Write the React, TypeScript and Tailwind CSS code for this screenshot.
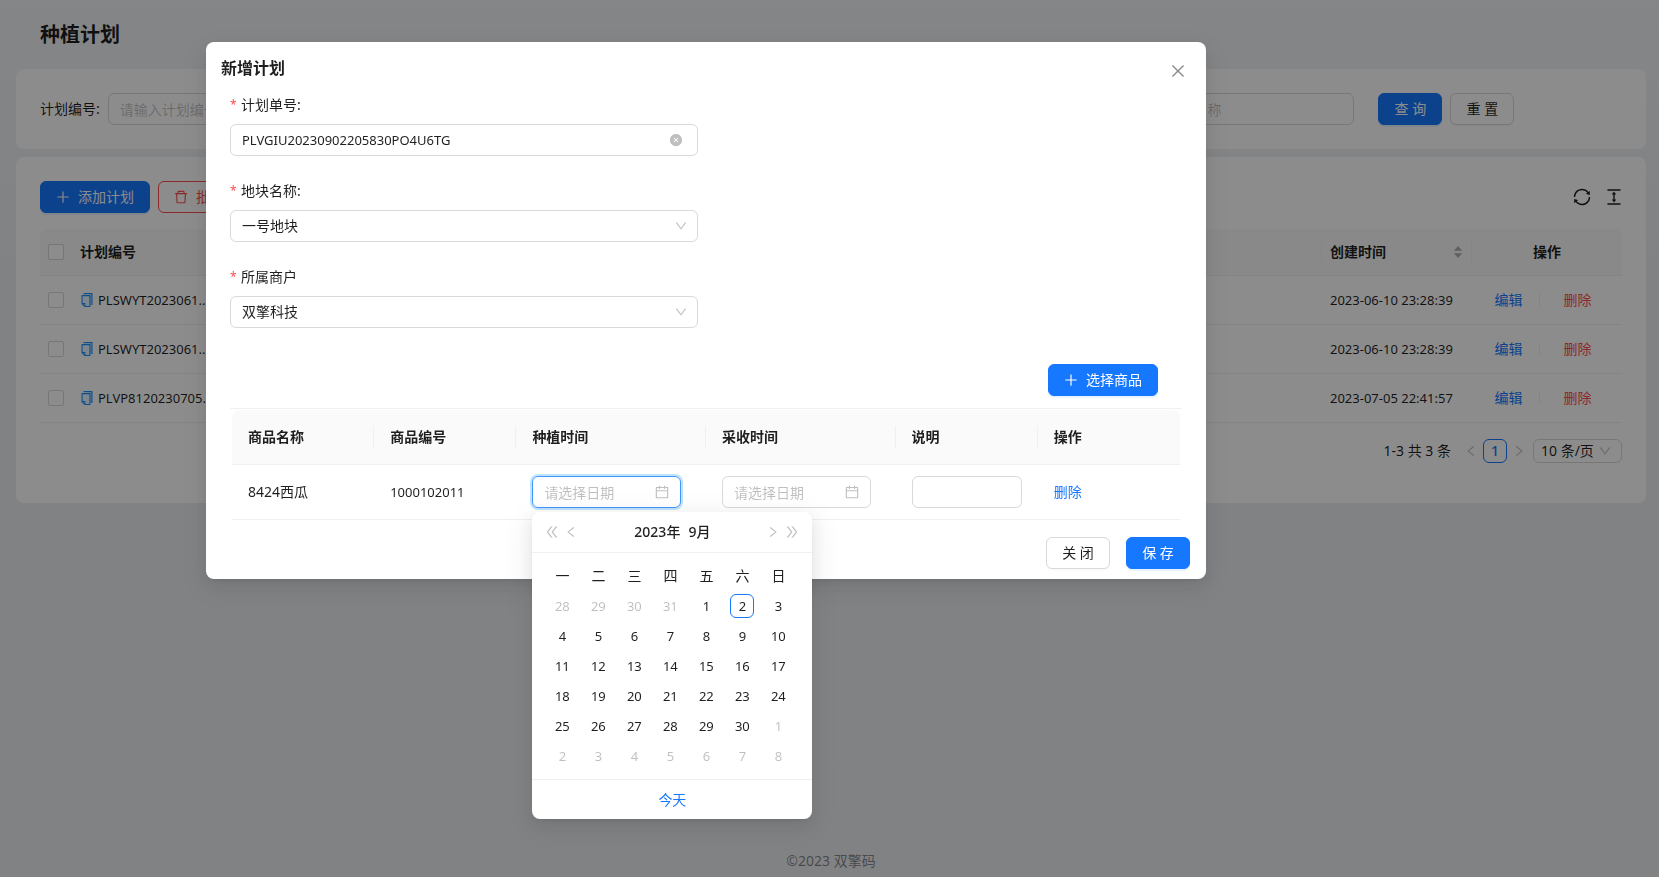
import React, { useState } from 'react';
import {
  AiFillCloseCircle,
  AiOutlineCalendar,
  AiOutlineClose,
  AiOutlineColumnHeight,
  AiOutlineDelete,
  AiOutlineDoubleLeft,
  AiOutlineDoubleRight,
  AiOutlineDown,
  AiOutlineLeft,
  AiOutlinePlus,
  AiOutlineRight,
  AiOutlineSync,
} from 'react-icons/ai';
import clsx from 'clsx';

interface Plan {
  id: number;
  code: string;
  createTime: string;
}

const plans: Plan[] = [
  { id: 1, code: 'PLSWYT2023061...', createTime: '2023-06-10 23:28:39' },
  { id: 2, code: 'PLSWYT2023061...', createTime: '2023-06-10 23:28:39' },
  { id: 3, code: 'PLVP8120230705...', createTime: '2023-07-05 22:41:57' },
];

const weekdays = ['一', '二', '三', '四', '五', '六', '日'];

// September 2023, first cell is Monday 28 August
const calendarDays = Array.from({ length: 42 }, (_, i) => {
  const date = new Date(2023, 7, 28 + i);
  return { day: date.getDate(), inMonth: date.getMonth() === 8 };
});
const calendarWeeks = Array.from({ length: 6 }, (_, i) => calendarDays.slice(i * 7, i * 7 + 7));

const App: React.FC = () => {
  const [open, setOpen] = useState(true);

  return (
    <div className="min-h-screen font-['Noto_Sans','Noto_Sans_CJK_SC',sans-serif] text-sm leading-[22px] text-black/88">
      <div className="flex min-h-screen flex-col bg-linear-to-b from-[#f2f4f6] to-[#ebedf1] to-30% pr-[13px] pl-4">
        <h1 className="px-6 pt-[21px] pb-5 text-xl leading-7 font-semibold">种植计划</h1>
        <SearchForm />
        <PlanTable />
        <footer className="mt-auto pb-[5px] text-center text-black/45">©2023 双擎码</footer>
      </div>
      {open && <PlanModal onClose={() => setOpen(false)} />}
    </div>
  );
};

export default App;

const SearchForm: React.FC = () => {
  return (
    <form className="rounded-lg bg-white p-6" onSubmit={(e) => e.preventDefault()}>
      <div className="-mx-3 grid grid-cols-[5fr_5fr_5fr_5fr_4fr]">
        <div className="flex items-center gap-2 px-3">
          <label htmlFor="code" className="shrink-0">计划编号:</label>
          <input id="code" placeholder="请输入计划编号" className="h-8 w-full min-w-0 rounded-md border border-[#d9d9d9] px-[11px] placeholder:text-black/25" />
        </div>
        <div className="col-start-4 flex items-center gap-2 px-3">
          <label htmlFor="land" className="shrink-0">地块名称:</label>
          <input id="land" placeholder="请输入地块名称" className="h-8 w-full min-w-0 rounded-md border border-[#d9d9d9] px-[11px] placeholder:text-black/25" />
        </div>
        <div className="flex gap-2 px-3">
          <Button type="primary">查 询</Button>
          <Button>重 置</Button>
        </div>
      </div>
    </form>
  );
};

interface ButtonProps {
  type?: 'primary' | 'default' | 'danger';
  icon?: React.ReactNode;
  onClick?(): void;
  children: React.ReactNode;
}

const Button: React.FC<ButtonProps> = ({ type = 'default', icon, onClick, children }) => {
  return (
    <button
      type="button"
      onClick={onClick}
      className={clsx(
        'flex h-8 shrink-0 items-center justify-center gap-2 rounded-md border px-[15px] whitespace-nowrap',
        !icon && 'w-16',
        type === 'primary' && 'border-[#1677ff] bg-[#1677ff] text-white shadow-[0_2px_0_rgba(5,145,255,0.1)]',
        type === 'default' && 'border-[#d9d9d9] bg-white shadow-[0_2px_0_rgba(0,0,0,0.02)]',
        type === 'danger' && 'border-[#ff4d4f] bg-white text-[#ff4d4f]',
      )}
    >
      {icon}
      <span>{children}</span>
    </button>
  );
};

const CopyIcon: React.FC = () => (
  <svg viewBox="64 64 896 896" className="size-3.5 shrink-0" aria-hidden="true">
    <path fill="#91caff" d="M736 136h56v688h-56z" />
    <path fill="#e6f7ff" d="M232 706h142c22.1 0 40 17.9 40 40v142h250V264H232v442z" />
    <path fill="#1890ff" d="M832 64H296c-4.4 0-8 3.6-8 8v56c0 4.4 3.6 8 8 8h496v688c0 4.4 3.6 8 8 8h56c4.4 0 8-3.6 8-8V96c0-17.7-14.3-32-32-32z" />
    <path fill="#1890ff" d="M704 192H192c-17.7 0-32 14.3-32 32v530.7c0 8.5 3.4 16.6 9.4 22.6l173.3 173.3c2.2 2.2 4.7 4 7.4 5.5v1.9h4.2c3.5 1.3 7.2 2 11 2H704c17.7 0 32-14.3 32-32V224c0-17.7-14.3-32-32-32zM350 856.2L263.9 770H350v86.2zM664 888H414V746c0-22.1-17.9-40-40-40H232V264h432v624z" />
  </svg>
);

const SorterIcon: React.FC = () => (
  <svg viewBox="0 0 10 14" className="h-3.5 w-2.5" fill="currentColor" aria-hidden="true">
    <path d="M5 1l4.2 4.8H.8zM5 13l4.2-4.8H.8z" />
  </svg>
);

const Checkbox: React.FC<{ label: string }> = ({ label }) => (
  <input type="checkbox" aria-label={label} className="block size-4 appearance-none rounded-xs border border-[#d9d9d9] bg-white" />
);

const PlanTable: React.FC = () => {
  return (
    <section className="mt-2 rounded-lg bg-white p-6">
      <div className="flex items-center justify-between">
        <div className="flex gap-2">
          <Button type="primary" icon={<AiOutlinePlus className="-m-px size-4" />}>添加计划</Button>
          <Button type="danger" icon={<AiOutlineDelete className="-m-px size-4" />}>批量删除</Button>
        </div>
        <div className="-mr-0.5 flex gap-3">
          <button type="button" aria-label="刷新"><AiOutlineSync className="size-5" /></button>
          <button type="button" aria-label="密度"><AiOutlineColumnHeight className="size-5" /></button>
        </div>
      </div>
      <table className="mt-4 w-full table-fixed border-separate border-spacing-0">
        <colgroup>
          <col className="w-8" />
          <col />
          <col className="w-[150px]" />
          <col className="w-[150px]" />
        </colgroup>
        <thead>
          <tr className="h-[47px] text-left">
            <th className="rounded-tl-lg border-b border-[#f0f0f0] bg-[#fafafa] px-2"><Checkbox label="全选" /></th>
            <th className="border-b border-[#f0f0f0] bg-[#fafafa] px-2 font-semibold">
              <div className="-mr-2 border-r border-[#f0f0f0]">计划编号</div>
            </th>
            <th className="border-b border-[#f0f0f0] bg-[#fafafa] px-2 font-semibold">
              <div className="-mr-2 flex items-center justify-between border-r border-[#f0f0f0] pr-2">
                创建时间
                <span className="text-black/30"><SorterIcon /></span>
              </div>
            </th>
            <th className="rounded-tr-lg border-b border-[#f0f0f0] bg-[#fafafa] px-2 text-center font-semibold">操作</th>
          </tr>
        </thead>
        <tbody>
          {plans.map((plan) => (
            <tr key={plan.id} className="h-[49px]">
              <td className="border-b border-[#f0f0f0] px-2"><Checkbox label={plan.code} /></td>
              <td className="border-b border-[#f0f0f0] px-2">
                <div className="flex items-center gap-1">
                  <CopyIcon />
                  <span className="text-[13px]">{plan.code}</span>
                </div>
              </td>
              <td className="border-b border-[#f0f0f0] px-2 text-[13px] whitespace-nowrap">{plan.createTime}</td>
              <td className="border-b border-[#f0f0f0] pr-4 pl-2">
                <div className="flex items-center justify-center">
                  <a href="#edit" className="text-[#1677ff]">编辑</a>
                  <span className="mr-6 ml-4 h-3 w-px bg-black/6" />
                  <a href="#delete" className="text-[#ff4d4f]">删除</a>
                </div>
              </td>
            </tr>
          ))}
        </tbody>
      </table>
      <div className="my-4 flex h-6 items-center justify-end">
        <span className="mr-2">1-3 共 3 条</span>
        <button type="button" aria-label="上一页" className="px-[5px] text-black/25"><AiOutlineLeft className="size-3.5" /></button>
        <button type="button" className="size-6 rounded-md border border-[#1677ff] leading-none font-medium text-[#1677ff]">1</button>
        <button type="button" aria-label="下一页" className="mr-0.5 px-[5px] text-black/25"><AiOutlineRight className="size-3.5" /></button>
        <div className="relative">
          <select aria-label="每页条数" className="block h-6 w-[89px] appearance-none rounded-md border border-[#d9d9d9] bg-white pl-[7px]">
            <option>10 条/页</option>
          </select>
          <AiOutlineDown className="pointer-events-none absolute top-[5px] right-2.5 size-3.5 text-black/25" />
        </div>
      </div>
    </section>
  );
};

const PlanModal: React.FC<{ onClose(): void }> = ({ onClose }) => {
  return (
    <div className="fixed inset-0 overflow-auto bg-black/45 pt-[42px] pl-[206px]">
      <div
        role="dialog"
        aria-label="新增计划"
        className="w-[1000px] rounded-lg bg-white pb-2.5 shadow-[0_6px_16px_0_rgba(0,0,0,0.08),0_3px_6px_-4px_rgba(0,0,0,0.12),0_9px_28px_8px_rgba(0,0,0,0.05)]"
      >
        <div className="flex items-end justify-between pt-3.5 pr-[19px] pl-[15px]">
          <h2 className="text-base leading-6 font-semibold">新增计划</h2>
          <button type="button" aria-label="关闭" className="text-black/45" onClick={onClose}><AiOutlineClose className="size-[18px]" /></button>
        </div>
        <div className="flex flex-col gap-[27px] px-6 pt-[17px]">
          <FormItem id="planNo" label="计划单号:">
            <input
              id="planNo"
              defaultValue="PLVGIU20230902205830PO4U6TG"
              className="block h-8 w-full rounded-md border border-[#d9d9d9] pr-8 pl-[11px] text-[13px]"
            />
            <AiFillCloseCircle className="pointer-events-none absolute top-[9px] right-[15px] size-3.5 text-black/25" />
          </FormItem>
          <FormItem id="landName" label="地块名称:">
            <SelectBox id="landName" value="一号地块" />
          </FormItem>
          <FormItem id="merchant" label="所属商户">
            <SelectBox id="merchant" value="双擎科技" />
          </FormItem>
        </div>
        <div className="mt-9 mb-3 flex justify-end pr-12">
          <Button type="primary" icon={<AiOutlinePlus className="-m-px size-4" />}>选择商品</Button>
        </div>
        <GoodsTable />
        <div className="mt-[17px] flex justify-end gap-4 pr-4">
          <Button onClick={onClose}>关 闭</Button>
          <Button type="primary">保 存</Button>
        </div>
      </div>
    </div>
  );
};

interface FormItemProps {
  id: string;
  label: string;
  children: React.ReactNode;
}

const FormItem: React.FC<FormItemProps> = ({ id, label, children }) => {
  return (
    <div className="w-[468px]">
      <label htmlFor={id} className="mb-[11px] flex h-4 items-center gap-1">
        <span className="w-[7px] text-xs text-[#ff4d4f]">*</span>
        {label}
      </label>
      <div className="relative">{children}</div>
    </div>
  );
};

const SelectBox: React.FC<{ id: string; value: string }> = ({ id, value }) => {
  return (
    <>
      <select id={id} className="block h-8 w-full appearance-none rounded-md border border-[#d9d9d9] bg-white px-[11px]">
        <option>{value}</option>
      </select>
      <AiOutlineDown className="pointer-events-none absolute top-[9px] right-2.5 size-3.5 text-black/25" />
    </>
  );
};

const goodsColumns = ['商品名称', '商品编号', '种植时间', '采收时间', '说明', '操作'];

const GoodsTable: React.FC = () => {
  return (
    <div className="mx-6 border-t border-[#f0f0f0] px-0.5 pt-px">
      <table className="w-full table-fixed border-separate border-spacing-0 text-left">
        <colgroup>
          <col className="w-[15%]" />
          <col className="w-[15%]" />
          <col className="w-[20%]" />
          <col className="w-[20%]" />
          <col className="w-[15%]" />
          <col className="w-[15%]" />
        </colgroup>
        <thead>
          <tr className="h-[55px]">
            {goodsColumns.map((col, index) => (
              <th key={col} className="border-b border-[#f0f0f0] bg-[#fafafa] pl-4 font-semibold first:rounded-tl-lg last:rounded-tr-lg">
                <div className={clsx(index < goodsColumns.length - 1 && 'border-r border-[#f0f0f0]')}>{col}</div>
              </th>
            ))}
          </tr>
        </thead>
        <tbody>
          <tr className="h-[55px]">
            <td className="border-b border-[#f0f0f0] px-4">8424西瓜</td>
            <td className="border-b border-[#f0f0f0] px-4 text-[13px]">1000102011</td>
            <td className="border-b border-[#f0f0f0] px-4"><DatePicker label="种植时间" open /></td>
            <td className="border-b border-[#f0f0f0] px-4"><DatePicker label="采收时间" /></td>
            <td className="border-b border-[#f0f0f0] px-4">
              <input aria-label="说明" className="block h-8 w-full rounded-md border border-[#d9d9d9] px-[11px]" />
            </td>
            <td className="border-b border-[#f0f0f0] px-4"><a href="#remove" className="text-[#1677ff]">删除</a></td>
          </tr>
        </tbody>
      </table>
    </div>
  );
};

const DatePicker: React.FC<{ label: string; open?: boolean }> = ({ label, open }) => {
  return (
    <div className="relative w-[149px]">
      <input
        aria-label={label}
        placeholder="请选择日期"
        className={clsx(
          'block h-8 w-full rounded-md border pr-8 pl-[11px] placeholder:text-black/25',
          open ? 'border-[#4096ff] shadow-[0_0_0_2px_rgba(5,145,255,0.25)]' : 'border-[#d9d9d9]',
        )}
      />
      <AiOutlineCalendar className="pointer-events-none absolute top-2 right-[11px] size-4 text-black/25" />
      {open && <Calendar />}
    </div>
  );
};

const Calendar: React.FC = () => {
  return (
    <div className="absolute top-full left-0 z-10 mt-1 w-[280px] rounded-lg bg-white shadow-[0_6px_16px_0_rgba(0,0,0,0.08),0_3px_6px_-4px_rgba(0,0,0,0.12),0_9px_28px_8px_rgba(0,0,0,0.05)]">
      <div className="flex h-[41px] items-center justify-between border-b border-[#f0f0f0] px-3">
        <div className="flex items-center gap-1 text-black/25">
          <button type="button" aria-label="上一年"><AiOutlineDoubleLeft className="size-4" /></button>
          <button type="button" aria-label="上个月"><AiOutlineLeft className="size-3.5" /></button>
        </div>
        <div className="flex gap-2 font-medium">
          <button type="button">2023年</button>
          <button type="button">9月</button>
        </div>
        <div className="flex items-center gap-1 text-black/25">
          <button type="button" aria-label="下个月"><AiOutlineRight className="size-3.5" /></button>
          <button type="button" aria-label="下一年"><AiOutlineDoubleRight className="size-4" /></button>
        </div>
      </div>
      <table className="mx-3 my-2 w-[252px] table-fixed text-center">
        <thead>
          <tr className="h-[30px]">
            {weekdays.map((day) => <th key={day} className="p-0 font-normal">{day}</th>)}
          </tr>
        </thead>
        <tbody>
          {calendarWeeks.map((week, index) => (
            <tr key={index} className="h-[30px]">
              {week.map(({ day, inMonth }) => (
                <td key={day} className="p-0">
                  <button
                    type="button"
                    className={clsx(
                      'mx-auto block size-6 rounded-md text-[13px]',
                      !inMonth && 'text-black/25',
                      inMonth && day === 2 && 'border border-[#1677ff]',
                    )}
                  >
                    {day}
                  </button>
                </td>
              ))}
            </tr>
          ))}
        </tbody>
      </table>
      <div className="flex h-10 items-center justify-center border-t border-[#f0f0f0]">
        <button type="button" className="text-[#1677ff]">今天</button>
      </div>
    </div>
  );
};
